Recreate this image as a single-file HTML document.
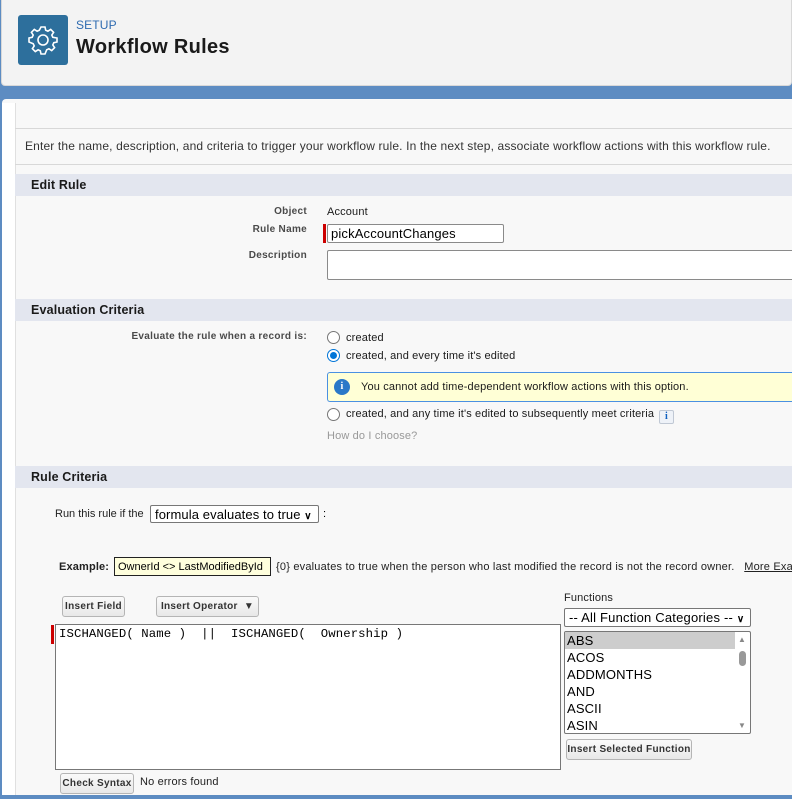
<!DOCTYPE html>
<html><head><style>
*{margin:0;padding:0;box-sizing:border-box}
body{width:792px;height:799px;overflow:hidden;background:#5d8cc2;font-family:"Liberation Sans",Arial,sans-serif;position:relative;color:#000;letter-spacing:0.15px}
.a{position:absolute}
.hdr{left:1px;top:0;width:791px;height:86px;background:#f3f3f3;border:1px solid #d8d8d8;border-top:none;border-radius:0 0 4px 4px}
.panel{left:2px;top:99px;width:790px;height:696px;background:#f8f8f8;border-radius:4px 0 0 0}
.strip{left:2px;top:103px;width:13px;height:692px;background:#fff}
.sec{left:15px;width:777px;height:22px;background:#e3e6ef;font-weight:bold;font-size:12.5px;padding:4px 0 0 16px;color:#1a1a1a}
.lbl{font-size:10px;font-weight:bold;color:#4a4a4a;text-align:right;letter-spacing:0.3px}
.t{font-size:11px;color:#1a1a1a}
.radio{width:13px;height:13px;border:1px solid #767676;border-radius:50%;background:#fff}
.btn{border:1px solid #b5b5b5;border-radius:3px;background:linear-gradient(#fafafa,#e8e8e8);font-size:10px;font-weight:bold;color:#333;text-align:center;letter-spacing:0.3px}
</style></head><body>
<div class="a hdr"></div>
<div class="a" style="left:18px;top:15px;width:50px;height:50px;background:#2d6f9c;border-radius:3px"></div>
<svg class="a" style="left:27px;top:24px" width="32" height="32" viewBox="0 0 32 32" fill="none" stroke="#fff" stroke-width="1.6"><path d="M14 3h4l.7 3.2 2.2 1 2.8-1.8 2.9 2.9-1.8 2.8 1 2.2L30 14v4l-3.2.7-1 2.2 1.8 2.8-2.9 2.9-2.8-1.8-2.2 1L18 30h-4l-.7-3.2-2.2-1-2.8 1.8-2.9-2.9 1.8-2.8-1-2.2L2 18v-4l3.2-.7 1-2.2-1.8-2.8 2.9-2.9 2.8 1.8 2.2-1z"/><circle cx="16" cy="16" r="5"/></svg>
<div class="a" style="left:76px;top:18px;font-size:12px;color:#2e6bb0">SETUP</div>
<div class="a" style="left:76px;top:36px;font-size:20px;font-weight:bold;color:#1a1a1a;letter-spacing:0.3px">Workflow Rules</div>
<div class="a panel"></div>
<div class="a strip"></div>
<div class="a" style="left:15px;top:103px;width:1px;height:692px;background:#e0e0e0"></div>
<div class="a" style="left:15px;top:128px;width:777px;height:1px;background:#d8d8d8"></div>
<div class="a" style="left:25px;top:139px;font-size:12px;color:#333;white-space:nowrap">Enter the name, description, and criteria to trigger your workflow rule. In the next step, associate workflow actions with this workflow rule.</div>
<div class="a" style="left:15px;top:164px;width:777px;height:1px;background:#d8d8d8"></div>
<div class="a sec" style="top:174px">Edit Rule</div>
<div class="a lbl" style="left:200px;top:206px;width:107px">Object</div>
<div class="a t" style="left:327px;top:206px">Account</div>
<div class="a lbl" style="left:200px;top:224px;width:107px">Rule Name</div>
<div class="a" style="left:323px;top:224px;width:3px;height:19px;background:#c00"></div>
<div class="a" style="left:327px;top:224px;width:177px;height:19px;border:1px solid #8a8a8a;border-radius:2px;background:#fff;font-size:13px;padding:1px 0 0 3px">pickAccountChanges</div>
<div class="a lbl" style="left:200px;top:250px;width:107px">Description</div>
<div class="a" style="left:327px;top:250px;width:470px;height:30px;border:1px solid #8a8a8a;border-radius:2px;background:#fff"></div>
<div class="a sec" style="top:299px">Evaluation Criteria</div>
<div class="a lbl" style="left:100px;top:331px;width:207px">Evaluate the rule when a record is:</div>
<div class="a radio" style="left:327px;top:331px"></div>
<div class="a t" style="left:346px;top:332px">created</div>
<div class="a radio" style="left:327px;top:349px;border-color:#0075d8"></div>
<div class="a" style="left:330px;top:352px;width:7px;height:7px;border-radius:50%;background:#0075d8"></div>
<div class="a t" style="left:346px;top:350px">created, and every time it's edited</div>
<div class="a" style="left:327px;top:372px;width:470px;height:30px;background:#ffffd6;border:1px solid #4a90e2;border-right:none;border-radius:3px 0 0 3px"></div>
<div class="a" style="left:334px;top:379px;width:16px;height:16px;border-radius:50%;background:#2a78c8;color:#fff;font-size:10px;font-weight:bold;text-align:center;line-height:16px;font-family:'Liberation Serif',serif">i</div>
<div class="a t" style="left:361px;top:381px">You cannot add time-dependent workflow actions with this option.</div>
<div class="a radio" style="left:327px;top:408px"></div>
<div class="a t" style="left:346px;top:408px">created, and any time it's edited to subsequently meet criteria</div>
<div class="a" style="left:659px;top:410px;width:15px;height:14px;border:1px solid #c0c8d4;border-radius:2px;background:#eef2f8;color:#1060c0;font-size:10px;font-weight:bold;text-align:center;line-height:12px;font-family:'Liberation Serif',serif">i</div>
<div class="a t" style="left:327px;top:430px;color:#999">How do I choose?</div>
<div class="a sec" style="top:466px">Rule Criteria</div>
<div class="a" style="left:55px;top:508px;font-size:11px;color:#222;letter-spacing:0">Run this rule if the</div>
<div class="a" style="left:150px;top:505px;width:169px;height:18px;border:1px solid #777;border-radius:2px;background:#fff;font-size:13px;padding:1px 0 0 4px;letter-spacing:0.1px">formula evaluates to true <span style="font-size:10px;font-weight:bold">&#8744;</span></div>
<div class="a" style="left:323px;top:508px;font-size:11px">:</div>
<div class="a" style="left:59px;top:561px;font-size:11px;font-weight:bold;color:#222">Example:</div>
<div class="a" style="left:114px;top:557px;width:157px;height:19px;border:1px solid #222;background:#ffffdd;font-size:11px;padding:3px 0 0 3px;letter-spacing:0">OwnerId &lt;&gt; LastModifiedById</div>
<div class="a" style="left:276px;top:561px;font-size:11px;color:#222;white-space:nowrap;letter-spacing:0.2px">{0} evaluates to true when the person who last modified the record is not the record owner. &nbsp;&nbsp;<u>More Examples</u></div>
<div class="a" style="left:564px;top:592px;font-size:11px;color:#222">Functions</div>
<div class="a btn" style="left:62px;top:596px;width:63px;height:21px;line-height:19px">Insert Field</div>
<div class="a btn" style="left:156px;top:596px;width:103px;height:21px;line-height:19px">Insert Operator &nbsp;▼</div>
<div class="a" style="left:564px;top:608px;width:187px;height:19px;border:1px solid #777;border-radius:2px;background:#fff;font-size:13px;padding:1px 0 0 4px;letter-spacing:0.2px">-- All Function Categories -- <span style="font-size:10px;font-weight:bold">&#8744;</span></div>
<div class="a" style="left:51px;top:625px;width:3px;height:19px;background:#c00"></div>
<div class="a" style="left:55px;top:624px;width:506px;height:146px;border:1px solid #777;background:#fff;font-family:'Liberation Mono',monospace;font-size:12.3px;padding:2px 0 0 3px;white-space:pre;letter-spacing:0.1px">ISCHANGED( Name )  ||  ISCHANGED(  Ownership )</div>
<div class="a" style="left:564px;top:631px;width:187px;height:103px;border:1px solid #777;border-radius:2px;background:#fff;font-size:13px;line-height:17px;overflow:hidden">
<div style="background:#cdcdcd;padding-left:2px;width:170px">ABS</div>
<div style="padding-left:2px">ACOS</div><div style="padding-left:2px">ADDMONTHS</div><div style="padding-left:2px">AND</div><div style="padding-left:2px">ASCII</div><div style="padding-left:2px">ASIN</div>
</div>
<div class="a" style="left:738px;top:635px;font-size:8px;color:#888">▲</div>
<div class="a" style="left:739px;top:651px;width:7px;height:15px;border-radius:4px;background:#999"></div>
<div class="a" style="left:738px;top:721px;font-size:8px;color:#888">▼</div>
<div class="a btn" style="left:566px;top:739px;width:126px;height:21px;line-height:19px">Insert Selected Function</div>
<div class="a btn" style="left:60px;top:773px;width:74px;height:21px;line-height:19px">Check Syntax</div>
<div class="a" style="left:140px;top:776px;font-size:11px;color:#222">No errors found</div>
</body></html>
